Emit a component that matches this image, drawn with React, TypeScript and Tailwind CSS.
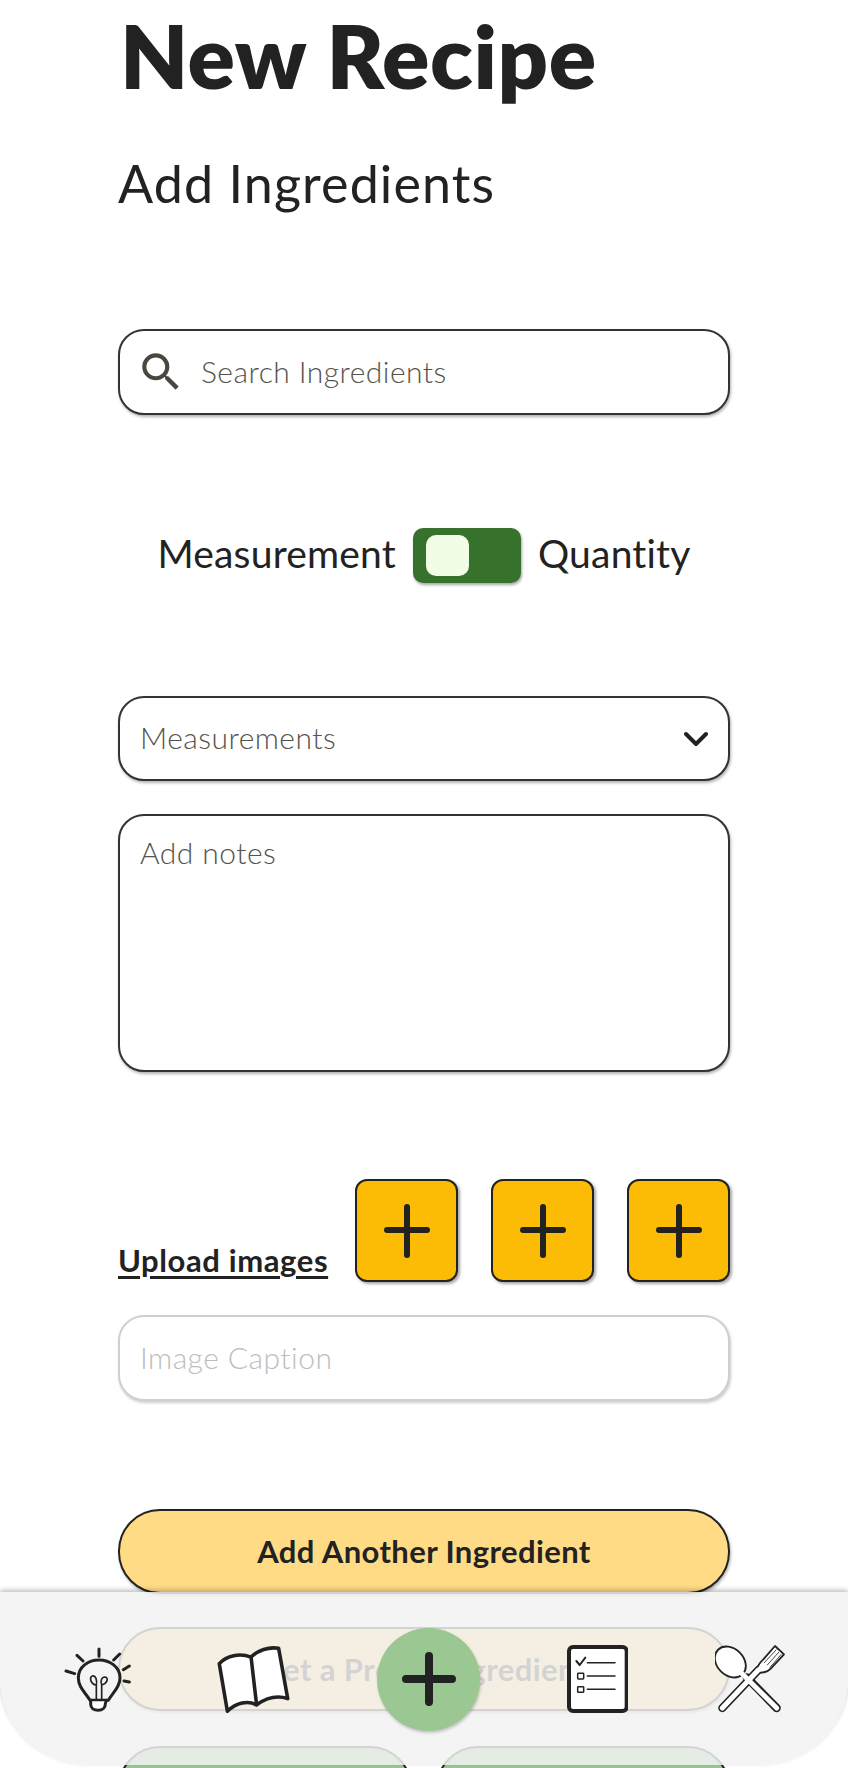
import React from 'react';
import { MdSearch } from 'react-icons/md';

const fieldShadow = 'shadow-[1px_2px_3px_rgba(0,0,0,0.3)]';
const placeholder = "text-[30px] font-light tracking-[0.45px]";

function BulbIcon() {
  return (
    <svg viewBox="70 78 200 195" width={66.7} height={65} fill="none" stroke="#222" strokeLinecap="round" strokeLinejoin="round">
      <path d="M148 238C135 215 113 200 113 170C113 138 142 117 175 117C208 117 238 138 238 170C238 200 215 215 203 238Z" fill="#f4f4f4" strokeWidth="9" />
      <path d="M150 238L150 250C150 262 160 268 172 268C186 268 194 260 194 248L197 238" fill="#fff" strokeWidth="9" />
      <path d="M167 238L167 192C150 190 145 170 155 165C165 162 170 178 167 192M183 238L183 192C200 188 205 170 193 168C183 168 178 180 183 192M150 238L197 238" strokeWidth="5" />
      <path d="M175 84L175 106M109 103L127 120M237 99L219 117M76 150L102 158M266 135L248 146M266 183L250 180" strokeWidth="9" />
    </svg>
  );
}

function BookIcon() {
  return (
    <svg viewBox="530 68 225 209" width={73} height={68} fill="none" stroke="#222" strokeLinecap="round" strokeLinejoin="round" strokeWidth="11">
      <path d="M537 125C560 100 600 92 635 105C655 85 690 72 720 78L748 233C715 222 680 232 652 252C625 238 590 245 562 272Z" fill="#fff" />
      <path d="M635 105L652 252" />
    </svg>
  );
}

function ListIcon() {
  return (
    <svg viewBox="50 77 185 204" width={61.7} height={68} fill="none" stroke="#222" strokeLinecap="round" strokeLinejoin="round">
      <rect x="56" y="83" width="173" height="192" rx="12" fill="#fff" strokeWidth="12" />
      <path d="M78 125L88 137L105 115" strokeWidth="6" />
      <path d="M111 130L194 130M111 170L194 170M111 210L194 210" strokeWidth="4.5" />
      <rect x="82" y="162" width="18" height="17" rx="2" strokeWidth="4.5" />
      <rect x="82" y="202" width="18" height="17" rx="2" strokeWidth="4.5" />
    </svg>
  );
}

function CutleryIcon() {
  return (
    <svg viewBox="495 72 210 210" width={70} height={70} fill="none" strokeLinecap="round" strokeLinejoin="round">
      <path d="M517 264L625 150M590 172L680 264" stroke="#222" strokeWidth="25" />
      <path d="M618 150C625 135 628 128 640 118L675 78L702 103L665 143C655 155 645 158 630 158Z" fill="#fff" stroke="#222" strokeWidth="5.5" />
      <ellipse cx="541" cy="126" rx="52" ry="40" transform="rotate(45 541 126)" fill="#fff" stroke="#222" strokeWidth="5.5" />
      <path d="M517 264L625 150M575 160L680 264" stroke="#fff" strokeWidth="15" />
      <path d="M643 128L678 90M652 135L686 97M660 142L693 104" stroke="#222" strokeWidth="2.5" />
    </svg>
  );
}

function YellowAdd() {
  return (
    <button className="flex h-[103px] w-[103px] items-center justify-center rounded-[12px] border-2 border-[#222] bg-[#fcbc05] shadow-[2px_2px_3px_rgba(0,0,0,0.35)]">
      <svg viewBox="0 0 46 54" width={46} height={54} fill="none" stroke="#222" strokeWidth="6" strokeLinecap="round">
        <path d="M23 3L23 51M3 26L43 26" />
      </svg>
    </button>
  );
}

export default function App() {
  return (
    <div className="relative h-[1768px] w-[848px] overflow-hidden bg-white font-['Lato',sans-serif] text-[#222]">
      <div className="mx-[118px] flex w-[612px] flex-col">
        <h1 className="h-[110px] pl-[2px] text-[88px] leading-[110px] font-extrabold tracking-[0.6px]">New Recipe</h1>
        <h2 className="mt-[41px] h-[64px] text-[52px] leading-[64px] font-normal tracking-[1.1px]">Add Ingredients</h2>

        <div className={`mt-[114px] flex h-[86px] items-center rounded-[26px] border-2 border-[#333] bg-white pl-[16px] ${fieldShadow}`}>
          <MdSearch size={50} color="#4a473f" />
          <span className={`ml-[15px] pb-[2px] text-[#55534c] ${placeholder}`}>Search Ingredients</span>
        </div>

        <div className="mt-[113px] flex h-[55px] items-center justify-center">
          <span className="pb-[4px] text-[39px] leading-[55px] tracking-[0.2px]">Measurement</span>
          <div className="mx-[17px] flex h-[55px] w-[108px] items-center rounded-[10px] bg-[#37722d] pl-[13px] shadow-[1px_2px_3px_rgba(0,0,0,0.35)]">
            <div className="h-[41px] w-[43px] rounded-[10px] bg-[#f1fde6]" />
          </div>
          <span className="pb-[4px] text-[39px] leading-[55px] tracking-[0.2px]">Quantity</span>
        </div>

        <div className={`mt-[113px] flex h-[85px] items-center justify-between rounded-[26px] border-2 border-[#333] bg-white pr-[20px] pl-[20px] ${fieldShadow}`}>
          <span className={`pb-[3px] text-[#55534c] ${placeholder}`}>Measurements</span>
          <svg viewBox="0 0 24 16" width={24} height={16} fill="none" stroke="#222" strokeWidth="4" strokeLinecap="round" strokeLinejoin="round">
            <path d="M2 3L12 13L22 3" />
          </svg>
        </div>

        <div className={`mt-[33px] h-[258px] rounded-[26px] border-2 border-[#333] bg-white px-[20px] pt-[18px] ${fieldShadow}`}>
          <span className={`leading-[36px] text-[#55534c] ${placeholder}`}>Add notes</span>
        </div>

        <div className="mt-[107px] flex items-end justify-between">
          <span className="mb-[3px] text-[31px] leading-[38px] font-bold tracking-[0.6px] underline underline-offset-[4px]">Upload images</span>
          <div className="flex gap-[33px]">
            <YellowAdd />
            <YellowAdd />
            <YellowAdd />
          </div>
        </div>

        <div className="mt-[33px] flex h-[86px] items-center rounded-[26px] border-2 border-[#cfcfcf] bg-white pl-[20px] shadow-[1px_2px_3px_rgba(0,0,0,0.2)]">
          <span className={`pb-[2px] text-[#bdbdbd] ${placeholder}`}>Image Caption</span>
        </div>

        <button className={`mt-[108px] flex h-[85px] shrink-0 items-center justify-center rounded-[42px] border-2 border-[#222] bg-[#ffdb85] text-[31px] font-bold tracking-[0.4px] ${fieldShadow}`}>
          Add Another Ingredient
        </button>

        <button className={`mt-[33px] flex h-[84px] shrink-0 items-center justify-center rounded-[42px] border-2 border-[#222] bg-[#ffdb85] text-[31px] font-bold tracking-[0.4px] ${fieldShadow}`}>
          Get a Preset Ingredient
        </button>

        <div className="mt-[35px] flex justify-between">
          <div className="h-[84px] w-[294px] rounded-[42px] border-2 border-[#222] bg-[#9bc892]" />
          <div className="h-[84px] w-[294px] rounded-[42px] border-2 border-[#222] bg-[#9bc892]" />
        </div>
      </div>

      {/* bottom nav sits over the page, which shows through it */}
      <nav className="absolute right-0 bottom-[3px] left-0 flex h-[173px] items-center justify-between rounded-b-[88px] bg-[#f2f2f2]/85 pt-[1px] pr-[63px] pl-[64px] shadow-[0_-2px_5px_rgba(0,0,0,0.25)]">
        <BulbIcon />
        <BookIcon />
        <button className="flex h-[103px] w-[103px] items-center justify-center rounded-full bg-[#9bc892] shadow-[1px_2px_3px_rgba(0,0,0,0.2)]">
          <svg viewBox="0 0 54 54" width={54} height={54} fill="none" stroke="#222" strokeWidth="8" strokeLinecap="round">
            <path d="M27 4L27 50M4 27L50 27" />
          </svg>
        </button>
        <ListIcon />
        <CutleryIcon />
      </nav>
    </div>
  );
}
